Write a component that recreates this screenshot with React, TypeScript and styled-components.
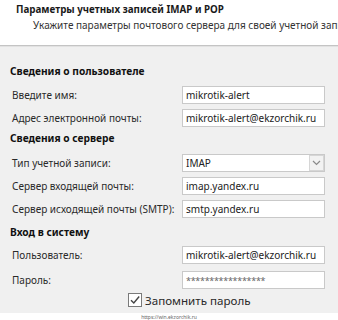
import React from "react";
import styled, { createGlobalStyle } from "styled-components";

const Global = createGlobalStyle`
  html, body { margin: 0; padding: 0; background: #ffffff; }
  body { width: 338px; height: 320px; overflow: hidden; font-family: "Noto Sans", "Open Sans", sans-serif; }
  #root { width: 338px; height: 320px; }
`;

const Page = styled.div`
  width: 338px;
  height: 320px;
  display: flex;
  flex-direction: column;
  overflow: hidden;
`;

const Header = styled.div`
  height: 46px;
  background: #ffffff;
  display: flex;
  flex-direction: column;
  padding-top: 2px;
  box-sizing: border-box;
  white-space: nowrap;
  overflow: hidden;
`;

const Title = styled.div`
  font-size: 9.8px;
  font-weight: 700;
  color: #1a1a1a;
  padding-left: 16px;
  line-height: 15px;
`;

const Subtitle = styled.div`
  font-size: 10px;
  color: #333;
  padding-left: 33px;
  line-height: 16px;
`;

const Separator = styled.div`
  height: 1px;
  background: #c4c4c4;
  border-bottom: 1px solid #e2e2e2;
`;

const Body = styled.div`
  flex: 1;
  background: #f0f0f0;
  display: flex;
  flex-direction: column;
  padding: 0 13px 5px 10px;
`;

const Heading = styled.div<{ $mt: number }>`
  margin-top: ${(p) => p.$mt}px;
  height: 16px;
  line-height: 16px;
  font-size: 10.2px;
  font-weight: 700;
  color: #111;
`;

const Row = styled.div<{ $mt: number }>`
  margin-top: ${(p) => p.$mt}px;
  display: flex;
  align-items: center;
  height: 18px;
`;

const Label = styled.div`
  width: 172px;
  padding-left: 2px;
  box-sizing: border-box;
  font-size: 10px;
  color: #2a2a2a;
  white-space: nowrap;
`;

const Field = styled.div`
  flex: 1;
  height: 18px;
  box-sizing: border-box;
  background: #ffffff;
  border: 1px solid #c9c9c9;
  font-size: 10px;
  color: #222;
  padding-left: 3px;
  display: flex;
  align-items: center;
  white-space: nowrap;
  overflow: hidden;
`;

const Stars = styled.span`
  font-size: 9px;
  color: #666;
  letter-spacing: -0.3px;
`;

const Combo = styled(Field)`
  padding-right: 0;
  justify-content: space-between;
`;

const DropButton = styled.div`
  width: 15px;
  height: 16px;
  box-sizing: border-box;
  border: 1px solid #d6d6d6;
  background: #f2f2f2;
  display: flex;
  align-items: center;
  justify-content: center;
`;

const CheckRow = styled.div`
  margin-top: 3px;
  display: flex;
  align-items: center;
  gap: 3px;
  height: 16px;
  padding-left: 118px;
`;

const Box = styled.div`
  width: 14px;
  height: 14px;
  box-sizing: border-box;
  border: 1px solid #7a7a7a;
  background: #ffffff;
  display: flex;
  align-items: center;
  justify-content: center;
`;

const CheckText = styled.span`
  font-size: 11.6px;
  color: #2a2a2a;
`;

const Footer = styled.div`
  height: 7px;
  background: #ffffff;
  display: flex;
  justify-content: center;
  align-items: center;
  font-size: 5px;
  color: #666;
`;

export default function App() {
  return (
    <Page>
      <Global />
      <Header>
        <Title>Параметры учетных записей IMAP и POP</Title>
        <Subtitle>Укажите параметры почтового сервера для своей учетной записи.</Subtitle>
      </Header>
      <Separator />
      <Body>
        <Heading $mt={16}>Сведения о пользователе</Heading>
        <Row $mt={7}>
          <Label>Введите имя:</Label>
          <Field>mikrotik-alert</Field>
        </Row>
        <Row $mt={5}>
          <Label>Адрес электронной почты:</Label>
          <Field>mikrotik-alert@ekzorchik.ru</Field>
        </Row>
        <Heading $mt={3}>Сведения о сервере</Heading>
        <Row $mt={8}>
          <Label>Тип учетной записи:</Label>
          <Combo>
            <span>IMAP</span>
            <DropButton>
              <svg width="9" height="6" viewBox="0 0 9 6">
                <path d="M1 1 L4.5 4.5 L8 1" fill="none" stroke="#8a8a8a" strokeWidth="1.2" />
              </svg>
            </DropButton>
          </Combo>
        </Row>
        <Row $mt={5}>
          <Label>Сервер входящей почты:</Label>
          <Field>imap.yandex.ru</Field>
        </Row>
        <Row $mt={5}>
          <Label>Сервер исходящей почты (SMTP):</Label>
          <Field>smtp.yandex.ru</Field>
        </Row>
        <Heading $mt={6}>Вход в систему</Heading>
        <Row $mt={6}>
          <Label>Пользователь:</Label>
          <Field>mikrotik-alert@ekzorchik.ru</Field>
        </Row>
        <Row $mt={7}>
          <Label>Пароль:</Label>
          <Field>
            <Stars>*****************</Stars>
          </Field>
        </Row>
        <CheckRow>
          <Box>
            <svg width="12" height="12" viewBox="0 0 12 12">
              <path d="M2 6.2 L4.8 9 L10.2 2.5" fill="none" stroke="#444" strokeWidth="1.4" />
            </svg>
          </Box>
          <CheckText>Запомнить пароль</CheckText>
        </CheckRow>
      </Body>
      <Footer>https://win.ekzorchik.ru</Footer>
    </Page>
  );
}
